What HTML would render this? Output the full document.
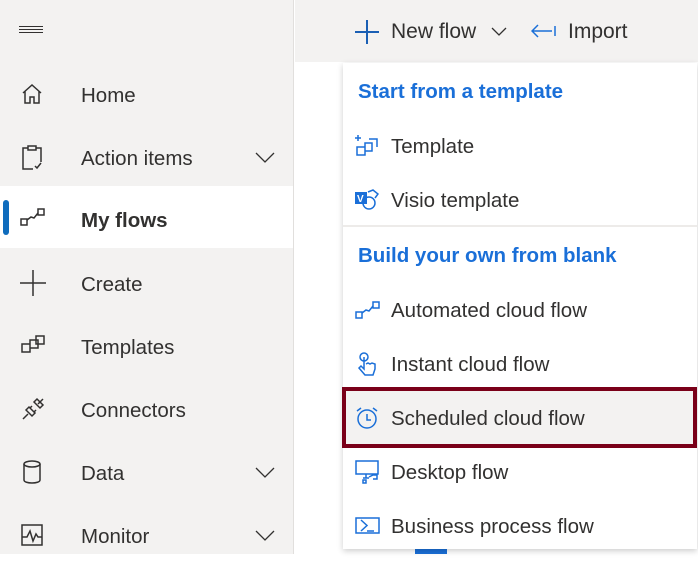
<!DOCTYPE html>
<html><head><style>
*{margin:0;padding:0;box-sizing:border-box}
body{width:698px;height:554px;overflow:hidden;background:#fff;font-family:"Segoe UI","Liberation Sans",sans-serif;position:relative;color:#323130}
.side{position:absolute;left:0;top:0;width:294px;height:554px;background:#f3f2f1;border-right:1px solid #e1dfdd}
.top{position:absolute;left:295px;top:0;width:403px;height:62px;background:#f3f2f1}
.nav{position:absolute;left:0;width:293px;height:62px;font-size:20.5px}
.nav .t{position:absolute;left:81px;top:54%;transform:translateY(-50%)}
.nav svg{position:absolute;left:20px;top:50%;transform:translateY(-50%)}
.nav svg.chev{left:255px;top:50%;margin-top:-5px;transform:none}
.menu{position:absolute;left:343px;top:63px;width:354px;height:486px;background:#fff;box-shadow:0 2px 6px rgba(0,0,0,.2)}
.mi{position:absolute;left:0;width:354px;font-size:20.5px}
.mi .t{position:absolute;left:48px;top:52%;transform:translateY(-50%);white-space:nowrap}
.mi svg{position:absolute;left:12px;top:50%;transform:translateY(-50%)}
.hd{position:absolute;left:15px;font-size:20.5px;font-weight:bold;color:#1a6fd8;transform:translateY(-50%)}
</style></head><body>
<div class="side">
 <svg style="position:absolute;left:19px;top:26px" width="24" height="8"><path d="M0 .5h24M0 3.5h24M0 6.5h24" stroke="#323130" stroke-width="1"/></svg>
 <div class="nav" style="top:63px"><svg width="24" height="24" viewBox="0 0 24 24" fill="none" stroke="#323130" stroke-width="1.5"><path d="M3 11L12 3l9 8M5 9v12h5v-6h4v6h5V9"/></svg><span class="t">Home</span></div>
 <div class="nav" style="top:126px"><svg width="24" height="26" viewBox="0 0 24 26" fill="none" stroke="#323130" stroke-width="1.5"><path d="M8 4H3v21h10M16 4h5v14M8 2h8v4H8zM15 22l2 2 4-5"/></svg><span class="t">Action items</span><svg class="chev" width="20" height="12"><path d="M1 1l9 9 9-9" stroke="#323130" fill="none" stroke-width="1.3"/></svg></div>
 <div class="nav" style="top:186px;background:#fff"><div style="position:absolute;left:3px;top:14px;width:6px;height:35px;border-radius:3px;background:#0f6cbd"></div><svg width="26" height="20" viewBox="0 0 26 20" fill="none" stroke="#323130" stroke-width="1.5"><rect x="1" y="12" width="6" height="6"/><rect x="18" y="2" width="6" height="6"/><path d="M7 13l4-3 3 1 4-5"/></svg><span class="t" style="font-weight:bold;top:56%">My flows</span></div>
 <div class="nav" style="top:252px"><svg width="26" height="26" viewBox="0 0 26 26"><path d="M13 0v26M0 13h26" stroke="#323130" stroke-width="1.5"/></svg><span class="t">Create</span></div>
 <div class="nav" style="top:315px"><svg width="26" height="24" viewBox="0 0 26 24" fill="none" stroke="#323130" stroke-width="1.5"><path d="M2 10h8v8H2zM10 6h8v8h-8zM16 2h8v8h-8z"/></svg><span class="t">Templates</span></div>
 <div class="nav" style="top:378px"><svg width="26" height="26" viewBox="0 0 26 26" fill="none" stroke="#323130" stroke-width="1.5"><path d="M3 23l5-5M23 3l-5 5M6 14l6 6 3-3-6-6zM14 6l6 6 3-3-6-6zM10 12l2-2M14 16l2-2"/></svg><span class="t">Connectors</span></div>
 <div class="nav" style="top:441px"><svg width="24" height="26" viewBox="0 0 24 26" fill="none" stroke="#323130" stroke-width="1.5"><ellipse cx="12" cy="5" rx="8" ry="3"/><path d="M4 5v16c0 2 4 3 8 3s8-1 8-3V5"/></svg><span class="t">Data</span><svg class="chev" width="20" height="12"><path d="M1 1l9 9 9-9" stroke="#323130" fill="none" stroke-width="1.3"/></svg></div>
 <div class="nav" style="top:504px"><svg width="24" height="24" viewBox="0 0 24 24" fill="none" stroke="#323130" stroke-width="1.5"><rect x="2" y="2" width="20" height="20"/><path d="M2 14h5l3-6 3 10 3-7 2 3h4"/></svg><span class="t">Monitor</span><svg class="chev" width="20" height="12"><path d="M1 1l9 9 9-9" stroke="#323130" fill="none" stroke-width="1.3"/></svg></div>
</div>
<div class="top">
 <svg style="position:absolute;left:60px;top:20px" width="24" height="24"><path d="M12 0v24M0 12h24" stroke="#1a5fb4" stroke-width="2"/></svg>
 <span style="position:absolute;left:96px;top:20px;font-size:21px">New flow</span>
 <svg style="position:absolute;left:196px;top:27px" width="16" height="9"><path d="M1 1l7 7 7-7" stroke="#323130" fill="none" stroke-width="1.3"/></svg>
 <svg style="position:absolute;left:236px;top:24px" width="26" height="14"><path d="M1 7h20M7 1L1 7l6 6M24 2v10" stroke="#1a6fd8" fill="none" stroke-width="1.5"/></svg>
 <span style="position:absolute;left:273px;top:20px;font-size:21px">Import</span>
</div>
<div style="position:absolute;left:415px;top:548px;width:32px;height:6px;background:#1a6fd8"></div>
<div class="menu">
 <div class="hd" style="top:29px">Start from a template</div>
 <div class="mi" style="top:56px;height:54px"><svg width="24" height="22" viewBox="0 0 24 22" fill="none" stroke="#1a6fd8" stroke-width="1.5"><path d="M3 0v6M0 3h6M2 12h8v8H2zM10 8h7v8h-7zM14 4h8v8"/></svg><span class="t">Template</span></div>
 <div class="mi" style="top:110px;height:54px"><svg width="24" height="22" viewBox="0 0 24 22"><rect x="0" y="3" width="12" height="12" fill="#1a6fd8"/><text x="2" y="13" font-size="10" fill="#fff" font-weight="bold" font-family="Liberation Sans">V</text><circle cx="14" cy="14" r="6" fill="none" stroke="#1a6fd8" stroke-width="1.5"/><path d="M13 3l5-2 5 4-3 4" fill="none" stroke="#1a6fd8" stroke-width="1.5"/></svg><span class="t">Visio template</span></div>
 <div style="position:absolute;left:0;top:162px;width:354px;height:2px;background:#edebe9"></div>
 <div class="hd" style="top:193px">Build your own from blank</div>
 <div class="mi" style="top:220px;height:54px"><svg width="26" height="20" viewBox="0 0 26 20" fill="none" stroke="#1a6fd8" stroke-width="1.5"><rect x="1" y="12" width="6" height="6"/><rect x="18" y="2" width="6" height="6"/><path d="M7 13l4-3 3 1 4-5"/></svg><span class="t">Automated cloud flow</span></div>
 <div class="mi" style="top:274px;height:54px"><svg width="24" height="26" viewBox="0 0 24 26" fill="none" stroke="#1a6fd8" stroke-width="1.5"><circle cx="9" cy="6" r="4"/><path d="M9 6v12l-3-3-2 2 6 7h8l2-6v-5l-3-1-2 1-2-1-2 1"/></svg><span class="t">Instant cloud flow</span></div>
 <div class="mi" style="top:324px;height:61px;background:#f3f2f1;border:4px solid #7a0019;left:-1px;width:355px"><svg style="left:9px" width="24" height="24" viewBox="0 0 24 24" fill="none" stroke="#1a6fd8" stroke-width="1.5"><circle cx="12" cy="13" r="9"/><path d="M12 8v6h4M2 5l4-3M22 5l-4-3"/></svg><span class="t" style="left:45px">Scheduled cloud flow</span></div>
 <div class="mi" style="top:382px;height:54px"><svg width="26" height="24" viewBox="0 0 26 24" fill="none" stroke="#1a6fd8" stroke-width="1.5"><path d="M1 1h22v13H1zM8 18h6M11 14v4M8 20h3v3H8zM14 17l4-2h4v4h-4"/></svg><span class="t">Desktop flow</span></div>
 <div class="mi" style="top:436px;height:54px"><svg width="26" height="18" viewBox="0 0 26 18" fill="none" stroke="#1a6fd8" stroke-width="1.5"><rect x="1" y="1" width="23" height="15"/><path d="M6 3l6 5.5L6 14M12 14h7"/></svg><span class="t">Business process flow</span></div>
</div>
</body></html>
